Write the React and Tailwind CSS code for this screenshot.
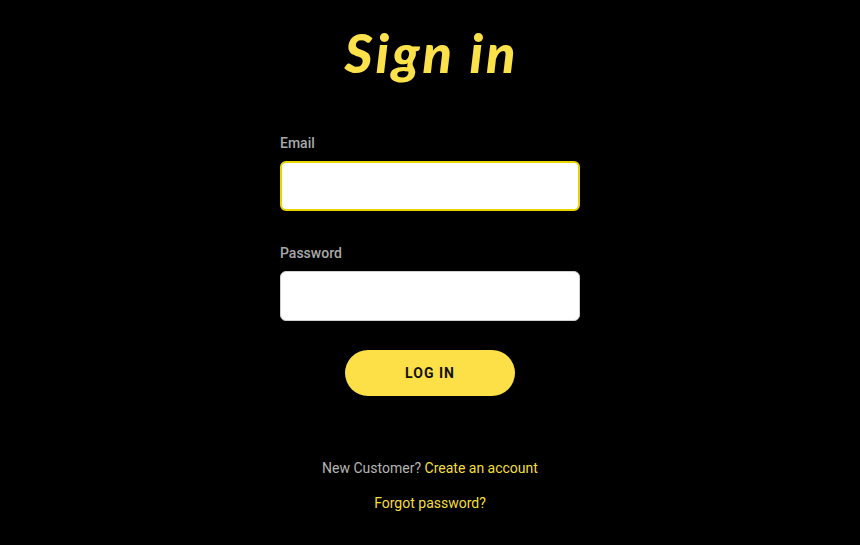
export default function App() {
  return (
    <div className="w-[860px] h-[545px] bg-black flex flex-col items-center font-['Roboto',sans-serif]">
      <h1 className="mt-[17px] pl-[3px] text-[54px] leading-[72px] font-black italic text-[#fbe14a] tracking-[3px] font-['Lato',sans-serif]">
        Sign in
      </h1>
      <form className="mt-[44px] w-[300px] flex flex-col" onSubmit={(e) => e.preventDefault()}>
        <label className="text-[14px] leading-[20px] font-medium text-[#a8a8a8]">Email</label>
        <input
          type="email"
          className="mt-[8px] h-[50px] rounded-[6px] bg-white border-2 border-[#e8d400] outline-none"
        />
        <label className="mt-[32px] text-[14px] leading-[20px] font-medium text-[#a8a8a8]">Password</label>
        <input
          type="password"
          className="mt-[8px] h-[50px] rounded-[6px] bg-white border border-[#cfcfcf] outline-none"
        />
        <button
          type="submit"
          className="self-center mt-[29px] w-[170px] h-[46px] rounded-full bg-[#fde047] text-[14px] font-bold tracking-[1px] text-[#111]"
        >
          LOG IN
        </button>
      </form>
      <p className="mt-[62px] text-[14px] leading-[20px] text-[#b5b5b5]">
        New Customer? <a className="text-[#f3df3c]">Create an account</a>
      </p>
      <a className="mt-[15px] text-[14px] leading-[20px] text-[#f3df3c]">Forgot password?</a>
    </div>
  );
}
